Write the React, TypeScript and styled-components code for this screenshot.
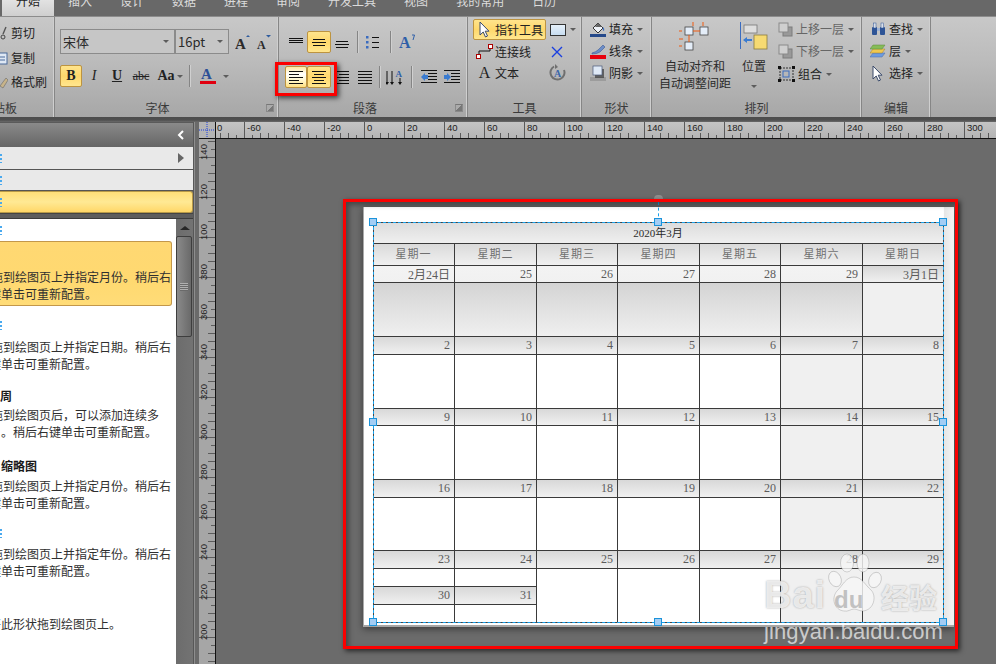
import React from 'react';
import styled, { createGlobalStyle } from 'styled-components';

const Global = createGlobalStyle`
  html, body { margin: 0; padding: 0; background: #6b6b6b; }
  * { box-sizing: border-box; }
`;

const CJK = `"Noto Sans CJK SC", "Liberation Sans", sans-serif`;
const SERIF = `"Liberation Serif", "Noto Sans CJK SC", serif`;

const Root = styled.div`
  position: relative; width: 996px; height: 664px; overflow: hidden;
  display: flex; flex-direction: column; background: #6b6b6b;
  font-family: ${CJK}; font-size: 12px; color: #222;
`;

/* ---------- tabs ---------- */
const TabBar = styled.div`
  height: 16px; flex: none; background: #686868; overflow: hidden;
  display: flex; align-items: flex-end; padding-left: 2px;
`;
const Tab = styled.div<{ $active?: boolean }>`
  padding: 0 14px 8px; line-height: 14px; height: 16px; white-space: nowrap;
  display: flex; align-items: flex-end;
  color: ${p => (p.$active ? '#222' : '#dcdcdc')};
  background: ${p => (p.$active ? 'linear-gradient(#e2e2e2,#cfcfcf)' : 'transparent')};
`;

/* ---------- ribbon ---------- */
const RibbonBar = styled.div`
  height: 101px; flex: none; display: flex;
  border-top: 1px solid #8c8c8c;
  background: linear-gradient(#c8c8c8 0%, #bbb 45%, #a7a7a7 100%);
`;
const Group = styled.div<{ $w: number; $clip?: boolean }>`
  position: relative; width: ${p => p.$w}px; flex: none;
  display: flex; flex-direction: column; overflow: hidden;
  border-right: 1px solid #868686;
  box-shadow: inset -1px 0 0 #cfcfcf;
`;
const Body = styled.div<{ $pt?: number; $pl?: number; $row?: boolean }>`
  flex: 1; min-height: 0; display: flex;
  flex-direction: ${p => (p.$row ? 'row' : 'column')};
  padding-top: ${p => p.$pt ?? 0}px; padding-left: ${p => p.$pl ?? 0}px;
`;
const GroupLabel = styled.div<{ $pr?: number; $ml?: number }>`
  height: 18px; flex: none; line-height: 18px; color: #3a3a3a; white-space: nowrap;
  text-align: ${p => (p.$ml !== undefined ? 'left' : 'center')};
  padding-right: ${p => p.$pr ?? 0}px; margin-left: ${p => p.$ml ?? 0}px;
`;
const Launcher = styled.div`
  position: absolute; right: 4px; bottom: 5px; width: 8px; height: 8px;
  border: 1px solid #8a8a8a; border-top-color: #777; background: linear-gradient(135deg, transparent 50%, #777 50%);
`;
const Row = styled.div<{ $h?: number; $mt?: number }>`
  display: flex; align-items: center; white-space: nowrap;
  height: ${p => p.$h ?? 22}px; margin-top: ${p => p.$mt ?? 0}px;
`;
const Col = styled.div<{ $w?: number; $ml?: number; $pt?: number }>`
  display: flex; flex-direction: column;
  ${p => (p.$w ? `width:${p.$w}px;` : '')}
  margin-left: ${p => p.$ml ?? 0}px; padding-top: ${p => p.$pt ?? 0}px;
`;
const Combo = styled.div<{ $w: number }>`
  width: ${p => p.$w}px; height: 25px; display: flex; align-items: center;
  justify-content: space-between; padding: 0 5px 0 2px; font-size: 13px;
  border: 1px solid #8b8b8b; background: #c6c6c6; color: #2a2a2a;
`;
const Caret = styled.span<{ $ml?: number }>`
  display: inline-block; width: 0; height: 0; flex: none; margin-left: ${p => p.$ml ?? 0}px;
  border-left: 3px solid transparent; border-right: 3px solid transparent; border-top: 3px solid #5c5c5c;
`;
const Btn = styled.div<{ $w: number; $on?: boolean; $light?: boolean }>`
  width: ${p => p.$w}px; height: 22px; flex: none; display: flex; align-items: center; justify-content: center;
  border-radius: 2px; border: 1px solid ${p => (p.$on || p.$light ? '#bd9440' : 'transparent')};
  background: ${p =>
    p.$light ? 'linear-gradient(#ffe9a0,#fff 35%,#fff5c6 70%,#ffdf80)'
      : p.$on ? 'linear-gradient(#ffe48c,#ffd86c 50%,#ffe68e)' : 'transparent'};
`;
const Vr = styled.div<{ $ml?: number; $mr?: number }>`
  width: 1px; height: 22px; flex: none; background: #858585; box-shadow: 1px 0 0 #d0d0d0;
  margin-left: ${p => p.$ml ?? 0}px; margin-right: ${p => p.$mr ?? 0}px;
`;
const ToolBtn = styled.div<{ $on?: boolean; $w?: number }>`
  width: ${p => p.$w ?? 73}px; height: 21px; display: flex; align-items: center; flex: none;
  border-radius: 2px; border: 1px solid ${p => (p.$on ? '#bd9440' : 'transparent')};
  background: ${p => (p.$on ? 'linear-gradient(#ffe48c,#ffd86c 50%,#ffe68e)' : 'transparent')};
`;
const Slot = styled.span<{ $w: number }>`
  width: ${p => p.$w}px; flex: none; display: flex; align-items: center; justify-content: center;
`;
const MenuText = styled.span<{ $ml?: number; $dim?: boolean }>`
  margin-left: ${p => p.$ml ?? 3}px; line-height: 16px;
  color: ${p => (p.$dim ? '#666' : '#222')};
`;
const BigCaption = styled.div`
  line-height: 17px; text-align: center; white-space: nowrap; color: #2a2a2a;
`;
const BigIcon = styled.div`
  height: 31px; margin-top: 5px; margin-bottom: 4px; display: flex; justify-content: center;
`;
const RibbonFoot = styled.div`
  height: 5px; flex: none; background: linear-gradient(#4c4c4c,#4f4f4f 60%,#6a6a6a);
`;

/* ---------- workspace ---------- */
const Workspace = styled.div` flex: 1; min-height: 0; display: flex; `;
const Side = styled.div`
  width: 193px; flex: none; display: flex; flex-direction: column; background: #666;
  overflow: hidden;
`;
const SideHead = styled.div`
  height: 25px; flex: none; display: flex; align-items: center; justify-content: flex-end; padding-right: 8px;
  background: linear-gradient(#8a8a8a,#666);
  border-top: 1px solid #5a5a5a;
`;
const Stencil = styled.div<{ $sel?: boolean; $h: number }>`
  height: ${p => p.$h}px; flex: none; display: flex; align-items: center; justify-content: space-between;
  padding-right: 9px;
  background: ${p => (p.$sel ? 'linear-gradient(#ffdf78,#ffe994 50%,#ffd768)' : '#e9e9e9')};
  ${p => (p.$sel ? 'border:1px solid #b89a48; border-left:none; border-radius:0 3px 3px 0;' : 'border-bottom:1px solid #555;')}
`;
const Sliver = styled.span<{ $c?: string }>`
  width: 1.5px; height: 9px; flex: none; display: block;
  background: repeating-linear-gradient(${p => p.$c ?? '#49a9ee'} 0 2px, transparent 2px 4px);
`;
const StencilFoot = styled.div`
  height: 6px; flex: none; background: #5d5d5d; border-top: 1px solid #444; border-bottom: 1px solid #3c3c3c;
`;
const ListArea = styled.div` flex: 1; min-height: 0; display: flex; `;
const ListBody = styled.div`
  width: 176px; flex: none; background: #fff; display: flex; flex-direction: column; overflow: hidden;
`;
const SliverRow = styled.div<{ $h: number; $mt?: number }>`
  height: ${p => p.$h}px; margin-top: ${p => p.$mt ?? 0}px; flex: none; display: flex; align-items: center;
`;
const HiCard = styled.div`
  width: 172px; height: 65px; flex: none; padding-top: 26px;
  background: linear-gradient(#ffd873,#ffd970 60%,#ffdc78);
  border: 1px solid #c3974a; border-left: none; border-radius: 0 3px 3px 0;
`;
const ItemHead = styled.div<{ $mt: number; $mb: number; $ml?: number }>`
  height: 17px; line-height: 17px; flex: none; font-weight: 700; color: #1a1a1a; white-space: nowrap;
  margin-top: ${p => p.$mt}px; margin-bottom: ${p => p.$mb}px; margin-left: ${p => p.$ml ?? 0}px;
`;
const Line = styled.div<{ $ml: number; $mt?: number }>`
  height: 17px; line-height: 17px; flex: none; white-space: nowrap; color: #2f2f2f;
  margin-left: ${p => p.$ml}px; margin-top: ${p => p.$mt ?? 0}px;
`;
const Scroll = styled.div`
  width: 17px; flex: none; background: linear-gradient(90deg,#6c6c6c,#737373); position: relative;
  display: flex; flex-direction: column; align-items: center; padding-top: 7px;
`;
const ScrollUp = styled.div`
  width: 0; height: 0; flex: none; border-left: 5px solid transparent; border-right: 5px solid transparent;
  border-bottom: 4px solid #262626;
`;
const Thumb = styled.div`
  width: 16px; height: 101px; flex: none; margin-top: 6px; margin-right: 1px; border-radius: 2px;
  border: 1px solid #3e3e3e; background: linear-gradient(90deg,#8a8a8a,#6a6a6a);
  display: flex; align-items: center; justify-content: center;
`;
const Grip = styled.div`
  width: 8px; height: 8px; background: repeating-linear-gradient(#b0b0b0 0 1px, #6a6a6a 1px 2px);
`;
const Splitter = styled.div`
  width: 6px; flex: none; background: #6a6a6a; border-left: 1px solid #575757;
  box-shadow: inset 1px 0 0 #8e8e8e;
`;
const Editor = styled.div`
  flex: 1; min-width: 0; display: grid; grid-template-columns: 17px 1fr; grid-template-rows: 17px 1fr;
`;
const Corner = styled.div`
  background: #b4b4b4; border-right: 1px solid #111; border-bottom: 1px solid #111;
  display: flex; align-items: center; justify-content: center;
`;
const HRuler = styled.div`
  background: linear-gradient(#c4c4c4,#b4b4b4); border-bottom: 1px solid #111; overflow: hidden;
`;
const VRuler = styled.div`
  background: #a6a6a6; border-right: 1px solid #111; overflow: hidden;
`;
const Canvas = styled.div`
  background: #6b6b6b; padding: 68px 0 0 147px; overflow: hidden;
`;
const Page = styled.div`
  width: 591px; height: 420px; padding: 15px 0 0 9px;
  background: linear-gradient(90deg,#fff 98.2%,#e6e6e6 98.4%,#f5f5f5);
  border-left: 1px solid #aaa; border-bottom: 2px solid #a6a6a6;
  box-shadow: 0 2px 7px rgba(0,0,0,.45);
`;
const CalWrap = styled.div` position: relative; width: 570px; height: 400px; `;
const Cal = styled.div`
  display: grid; width: 571px; height: 401px;
  grid-template-columns: 82px 82px 81px 82px 81px 82px 81px;
  grid-template-rows: 22px 22px 17px 54px 18px 54px 17px 54px 18px 53px 18px 18px 18px 18px;
  font-family: ${SERIF}; font-size: 12px; color: #5c5c5c;
`;
const Cell = styled.div`
  border-right: 1px solid #3a3a3a; border-bottom: 1px solid #3a3a3a;
`;
const Title = styled(Cell)`
  grid-column: span 7; display: flex; align-items: center; justify-content: center; color: #2c2c2c;
  font-size: 11px; padding-bottom: 2px; background: linear-gradient(#dcdcdc,#efefef);
`;
const Weekday = styled(Cell)`
  display: flex; align-items: center; justify-content: center; letter-spacing: 1px; font-size: 11px; color: #707070;
  padding-bottom: 3px; background: linear-gradient(#dadada,#f0f0f0);
`;
const DayHead = styled(Cell)<{ $light?: boolean }>`
  display: flex; align-items: center; justify-content: flex-end; padding-right: 4px;
  background: ${p => (p.$light ? 'linear-gradient(#f3f3f3,#f1f1f1)' : 'linear-gradient(#d8d8d8,#f0f0f0)')};
`;
const DayBody = styled(Cell)<{ $tone?: 'grad' | 'soft' | 'white'; $span?: number }>`
  ${p => (p.$span ? `grid-row: span ${p.$span};` : '')}
  background: ${p =>
    p.$tone === 'grad' ? 'linear-gradient(#d4d4d4,#efefef)'
      : p.$tone === 'soft' ? '#f0f0f0' : '#fff'};
`;
const Selection = styled.div`
  position: absolute; inset: 0 -1px -1px 0; border: 1px solid #454545; pointer-events: none;
  &::before {
    content: ''; position: absolute; inset: -1px; border: 1px dashed #17a1ec;
  }
`;
const Handle = styled.div<{ $x: number; $y: number }>`
  position: absolute; width: 8px; height: 8px; margin: -4px 0 0 -4px;
  left: ${p => p.$x}%; top: ${p => p.$y}%;
  background: #a3cdf4; border: 1px solid #1b93da;
`;
const RotLine = styled.div`
  position: absolute; left: 50%; top: -20px; height: 20px; border-left: 1px dashed #17a1ec;
`;
const RotKnob = styled.div`
  position: absolute; left: calc(50% - 4px); top: -27px; width: 9px; height: 6px; border-radius: 4px 4px 1px 1px;
  background: #8f8f8f;
`;
const RedBox = styled.div<{ $l: number; $t: number; $w: number; $h: number; $inset?: boolean }>`
  position: absolute; left: ${p => p.$l}px; top: ${p => p.$t}px; width: ${p => p.$w}px; height: ${p => p.$h}px;
  border: 3px solid #fb0000; pointer-events: none;
  box-shadow: 2px 2px 5px rgba(0,0,0,.65)${p => (p.$inset ? ', inset 3px 3px 5px rgba(0,0,0,.35)' : '')};
`;
const Mark = styled.div`
  position: absolute; left: 764px; top: 553px; width: 190px; color: rgba(255,255,255,.68);
  display: flex; flex-direction: column; pointer-events: none;
`;
const MarkTop = styled.div` display: flex; align-items: flex-end; height: 62px; `;
const MarkBai = styled.span`
  font: 700 38px/40px "Liberation Sans", sans-serif; width: 60px; letter-spacing: 1px; color: rgba(245,245,245,.85);
  text-shadow: 0 0 2px rgba(110,110,110,.6);
`;
const Paw = styled.div` position: relative; width: 56px; height: 62px; flex: none; margin-left: 2px; `;
const MarkDu = styled.span`
  position: absolute; left: 8px; bottom: 2px; font: 700 24px/26px "Liberation Sans", sans-serif; color: rgba(170,170,170,.7);
`;
const MarkCn = styled.span`
  font: 700 28px/36px ${CJK}; margin-left: -1px; color: rgba(245,245,245,.85);
  text-shadow: 0 0 2px rgba(110,110,110,.6);
`;
const MarkUrl = styled.div`
  font: 400 22px/28px "Liberation Sans", sans-serif; margin-top: 3px; white-space: nowrap; letter-spacing: .1px;
`;

/* ---------- icons ---------- */
type L = [number, number, number];
const Bars = ({ lines, w = 16, h = 14 }: { lines: L[]; w?: number; h?: number }) => (
  <svg width={w} height={h} viewBox={`0 0 ${w} ${h}`}>
    {lines.map(([y, a, b], i) => <line key={i} x1={a} x2={b} y1={y + .5} y2={y + .5} stroke="#111" strokeWidth="1" />)}
  </svg>
);
const Letter = styled.span<{ $c?: string; $s?: number; $w?: number; $i?: boolean; $u?: boolean; $st?: boolean }>`
  font-family: "Liberation Serif", serif; font-size: ${p => p.$s ?? 14}px; font-weight: ${p => p.$w ?? 700};
  color: ${p => p.$c ?? '#222'}; line-height: 14px;
  ${p => (p.$i ? 'font-style:italic;' : '')} ${p => (p.$u ? 'text-decoration:underline;' : '')}
  ${p => (p.$st ? 'text-decoration:line-through;' : '')}
`;
const GrowA = ({ up }: { up: boolean }) => (
  <svg width="16" height="16" viewBox="0 0 16 16">
    <path d={up ? 'M11 3l2-2 2 2z' : 'M10 1h5l-2.5 2.5z'} fill="#2f5c9e" />
    <text x={up ? 0 : 1} y="14.5" fontFamily="Liberation Serif" fontWeight="700" fontSize={up ? 15 : 12} fill="#2b2b2b">A</text>
  </svg>
);
const FontColor = () => (
  <svg width="18" height="18" viewBox="0 0 18 18">
    <text x="2" y="12" fontFamily="Liberation Serif" fontWeight="700" fontSize="15" fill="#2b4f96">A</text>
    <rect x="1" y="14" width="16" height="3" fill="#e00010" />
  </svg>
);
const Bullets = () => (
  <svg width="14" height="14" viewBox="0 0 14 14">
    {[1, 6, 11].map(y => <g key={y}><rect x="0" y={y} width="2.500" height="2.500" fill="#3a6cc0" /><line x1="6" x2="13" y1={y + 1.5} y2={y + 1.5} stroke="#111" /></g>)}
  </svg>
);
const StyleA = () => (
  <svg width="16" height="16" viewBox="0 0 16 16">
    <text x="0" y="14" fontFamily="Liberation Serif" fontWeight="700" fontSize="16" fill="#2e5fa8">A</text>
    <path d="M13 1h2.5l-1.5 5" fill="none" stroke="#2e5fa8" />
  </svg>
);
const LineHeight = () => (
  <svg width="17" height="17" viewBox="0 0 17 17">
    {[1, 6].map(x => <g key={x}><line x1={x} x2={x} y1="2" y2="14" stroke="#111" /><path d={`M${x - 2} 13h4l-2 3z`} fill="#111" /></g>)}
    <line x1="14" x2="14" y1="9" y2="14" stroke="#111" /><path d="M12 13h4l-2 3z" fill="#111" />
    <text x="9.5" y="8" fontFamily="Liberation Serif" fontWeight="700" fontSize="9" fill="#2e5fa8">A</text>
  </svg>
);
const Indent = ({ flip }: { flip?: boolean }) => (
  <svg width="16" height="14" viewBox="0 0 16 14">
    {[1, 4, 7, 10, 13].map(y => <line key={y} x1={y === 1 || y === 13 ? 0 : 7} x2="16" y1={y - .5} y2={y - .5} stroke="#111" />)}
    <path d={flip ? 'M0 5h3V3l4 4-4 4V9H0z' : 'M7 5H4V3L0 7l4 4V9h3z'} fill="#3a7bd0" />
  </svg>
);
const Arrow = () => (
  <svg width="14" height="17" viewBox="0 0 14 17">
    <path d="M2 1v13l3.2-3 2.3 5 2-1-2.300-4.800H11z" fill="#fff" stroke="#3a4a6a" strokeWidth="1" />
  </svg>
);
const RectIcon = () => <svg width="16" height="12" viewBox="0 0 16 12"><defs><linearGradient id="ri" x1="0" y1="0" x2="0" y2="1"><stop offset="0" stopColor="#e8f2fb" /><stop offset="1" stopColor="#c6dcf0" /></linearGradient></defs><rect x=".5" y=".5" width="15" height="11" fill="url(#ri)" stroke="#333" /></svg>;
const Connector = () => (
  <svg width="17" height="15" viewBox="0 0 17 15">
    <path d="M3 11V7h11V3" fill="none" stroke="#111" />
    <rect x=".5" y="10.500" width="4" height="4" fill="#fff" stroke="#a00" /><rect x="12.500" y=".5" width="4" height="4" fill="#fff" stroke="#a00" />
  </svg>
);
const BlueX = () => <svg width="12" height="12" viewBox="0 0 12 12"><path d="M1 1l10 10M11 1L1 11" stroke="#1a3fe0" strokeWidth="1.400" /></svg>;
const RotA = () => (
  <svg width="17" height="17" viewBox="0 0 17 17">
    <path d="M5 2.500A7 7 0 1 0 15 6" fill="none" stroke="#6f6f6f" strokeWidth="2" />
    <path d="M6 0v5l3-2z" fill="#6f6f6f" />
    <text x="5" y="13" fontFamily="Liberation Serif" fontWeight="700" fontSize="10" fill="#3b66aa">A</text>
  </svg>
);
const Fill = () => (
  <svg width="16" height="15" viewBox="0 0 16 15">
    <path d="M3 6l5-5 5 5-5 5z" fill="#eef2f8" stroke="#333" />
    <path d="M8 1l-3 4h7z" fill="#666" />
    <path d="M13 5q2 2 1 4-2-1-1-4z" fill="#3a6cc0" />
    <rect x="0" y="12" width="16" height="3" fill="#25498a" />
  </svg>
);
const Pen = () => (
  <svg width="16" height="15" viewBox="0 0 16 15">
    <path d="M2 9q4-1 6-3l5-5 2 2-5 5q-3 2-8 2z" fill="#6c8dc8" stroke="#3c5b96" strokeWidth=".6" />
    <rect x="0" y="11" width="16" height="4" fill="#e8000c" />
  </svg>
);
const Shadow = () => (
  <svg width="16" height="16" viewBox="0 0 16 16">
    <rect x="0" y="12" width="16" height="4" fill="#9c9c9c" />
    <rect x="5" y="4" width="9" height="9" fill="#3c3c3c" opacity=".7" />
    <rect x="3" y="1" width="9" height="9" fill="#dfe9f6" stroke="#4a5a7a" strokeWidth=".7" />
  </svg>
);
const Snap = () => (
  <svg width="32" height="31" viewBox="0 0 32 31">
    {[[10, 9], [25, 9], [10, 24]].map(([x, y], i) => (
      <rect key={i} x={x - 4} y={y - 4} width="8" height="8" fill="#e4edf8" stroke="#444" strokeWidth=".8" />
    ))}
    <path d="M14 9h7M10 13v7" stroke="#f05a10" strokeWidth="1" />
    <path d="M14 0v4M24 0v4M0 17h4M0 9h3M0 24h3" stroke="#f05a10" strokeWidth="1" />
  </svg>
);
const Position = () => (
  <svg width="28" height="31" viewBox="0 0 28 31">
    <line x1=".5" x2=".5" y1="0" y2="27" stroke="#3a6cc0" />
    <rect x="4" y="3" width="13" height="8" fill="#dedede" stroke="#777" strokeWidth=".8" />
    <rect x="14" y="13" width="13" height="14" fill="#f6da72" stroke="#8b7b3e" strokeWidth=".8" />
    <path d="M3 18l4-3v2h5v2H7v2z" fill="#3a7bd0" />
  </svg>
);
const Layers = () => (
  <svg width="15" height="15" viewBox="0 0 15 15">
    <rect x="5" y="5" width="9" height="9" fill="#999" stroke="#7c7c7c" />
    <rect x="1" y="1" width="9" height="9" fill="#cfcfcf" stroke="#8a8a8a" />
  </svg>
);
const GroupIcon = () => (
  <svg width="17" height="16" viewBox="0 0 17 16">
    <rect x="2" y="2" width="13" height="12" fill="none" stroke="#333" strokeDasharray="2 1" />
    <rect x="5" y="5" width="6" height="6" fill="none" stroke="#3a6cc0" />
    {[[0, 0], [14, 0], [0, 13], [14, 13]].map(([x, y], i) => <rect key={i} x={x} y={y} width="3" height="3" fill="#111" />)}
  </svg>
);
const Binoc = () => (
  <svg width="15" height="14" viewBox="0 0 15 14">
    <rect x="1" y="5" width="5" height="8" rx="1" fill="#2e5496" />
    <rect x="9" y="5" width="5" height="8" rx="1" fill="#2e5496" />
    <rect x="2.500" y="1" width="2.500" height="5" fill="#d9dfe9" stroke="#2e5496" strokeWidth=".5" />
    <rect x="10" y="1" width="2.500" height="5" fill="#d9dfe9" stroke="#2e5496" strokeWidth=".5" />
    <rect x="6" y="6" width="3" height="3" fill="#9fb4d6" />
  </svg>
);
const Stack = () => (
  <svg width="16" height="14" viewBox="0 0 16 14">
    <path d="M3 9h12l-3 4H0z" fill="#6d9be0" stroke="#4b6ca8" strokeWidth=".5" />
    <path d="M3 5h12l-3 4H0z" fill="#f0c850" stroke="#a08030" strokeWidth=".5" />
    <path d="M3 1h12l-3 4H0z" fill="#86bc58" stroke="#5a8a3a" strokeWidth=".5" />
  </svg>
);
const Chevron = () => <svg width="8" height="10" viewBox="0 0 8 10"><path d="M6 1L2 5l4 4" fill="none" stroke="#fff" strokeWidth="2" /></svg>;
const RightTri = () => <svg width="6" height="10" viewBox="0 0 6 10"><path d="M0 0l6 5-6 5z" fill="#666" /></svg>;
const Cross = () => (
  <svg width="16" height="16" viewBox="0 0 16 16"><path d="M8 0v16M0 8h16" stroke="#1a3fe0" strokeDasharray="1 1" /></svg>
);
const Scissor = () => <svg width="8" height="14" viewBox="0 0 8 14"><circle cx="3" cy="11" r="2" fill="none" stroke="#444" /><path d="M3 8L6 1" stroke="#555" strokeWidth="1.400" /></svg>;
const CopyI = () => <svg width="8" height="14" viewBox="0 0 8 14"><rect x="-4" y="2" width="11" height="11" fill="#dfe8f4" stroke="#4a6a9a" /><path d="M0 6h5M0 9h5" stroke="#4a6a9a" /></svg>;
const Brush = () => <svg width="8" height="14" viewBox="0 0 8 14"><path d="M0 11L6 3l2 2-5 8z" fill="#c8b48a" stroke="#6a6a6a" strokeWidth=".6" /></svg>;

const HTicks = () => {
  const W = 781;
  const items: React.ReactNode[] = [];
  for (let x = 363 - 160; x < 215 + W; x += 8) {
    const px = x - 215;
    if (px < 0) continue;
    const k = ((x - 363) % 40 + 40) % 40;
    const h = k === 0 ? 16 : k === 16 || k === 24 ? 5 : 3;
    items.push(<line key={x} x1={px + .5} x2={px + .5} y1={16 - h} y2={16} stroke="#5a5a5a" />);
  }
  for (let v = -80; v <= 300; v += 20) {
    const x = 363 + v * 2 - 215;
    const label = v === -80 ? '0' : String(v);
    const tx = v === -80 ? 1 : x + 3;
    items.push(<text key={`t${v}`} x={tx} y="9" fontFamily="Liberation Sans" fontSize="9.500" fill="#222">{label}</text>);
  }
  return <svg width={W} height="16" viewBox={`0 0 ${W} 16`}>{items}</svg>;
};
const VTicks = () => {
  const labels = [140, 120, 100, 380, 360, 340, 320, 300, 280, 260, 240, 220, 200];
  const items: React.ReactNode[] = [];
  for (let y = 157 - 40; y < 664; y += 8) {
    const py = y - 139;
    if (py < 0) continue;
    const k = ((y - 157) % 40 + 40) % 40;
    const w = k === 0 ? 16 : k === 16 || k === 24 ? 7 : 4;
    items.push(<line key={y} x1={16 - w} x2="16" y1={py + .5} y2={py + .5} stroke="#5c5c5c" />);
  }
  labels.forEach((l, i) => {
    const cy = 152 + i * 40 - 139;
    items.push(<text key={l} transform={`translate(7.500 ${cy}) rotate(-90)`} textAnchor="middle" fontFamily="Liberation Sans" fontSize="9.500" fill="#222">{l}</text>);
  });
  return <svg width="16" height="525" viewBox="0 0 16 525">{items}</svg>;
};

const TABS = ['开始', '插入', '设计', '数据', '进程', '审阅', '开发工具', '视图', '我的常用', '日历'];
const WEEK = ['星期一', '星期二', '星期三', '星期四', '星期五', '星期六', '星期日'];

const bodyTone = (col: number): 'soft' | 'white' => (col >= 5 ? 'soft' : 'white');

const Calendar = () => {
  const heads = [
    ['2月24日', '25', '26', '27', '28', '29', '3月1日'],
    ['2', '3', '4', '5', '6', '7', '8'],
    ['9', '10', '11', '12', '13', '14', '15'],
    ['16', '17', '18', '19', '20', '21', '22'],
  ];
  return (
    <Cal>
      <Title>2020年3月</Title>
      {WEEK.map(w => <Weekday key={w}>{w}</Weekday>)}
      {heads.map((row, r) => (
        <React.Fragment key={r}>
          {row.map((d, c) => <DayHead key={d + c} $light={r === 0 && c < 6}>{d}</DayHead>)}
          {row.map((d, c) => (
            <DayBody key={`b${d}${c}`} $tone={r === 0 ? (c < 6 ? 'grad' : 'soft') : bodyTone(c)} />
          ))}
        </React.Fragment>
      ))}
      {['23', '24', '25', '26', '27', '28', '29'].map(d => <DayHead key={`h${d}`}>{d}</DayHead>)}
      <DayBody $tone="white" /><DayBody $tone="white" />
      {[2, 3, 4, 5, 6].map(c => <DayBody key={`s${c}`} $span={3} $tone={bodyTone(c)} />)}
      <DayHead>30</DayHead><DayHead>31</DayHead>
      <DayBody $tone="white" /><DayBody $tone="white" />
    </Cal>
  );
};

const five = (a: number, b: number, c: number, d: number): L[] => [
  [1, 1, 15], [4, a, b], [7, 1, 15], [10, c, d], [13, 1, 15],
];

export default function App() {
  return (
    <Root>
      <Global />
      <TabBar>
        {TABS.map((t, i) => <Tab key={t} $active={i === 0}>{t}</Tab>)}
      </TabBar>
      <RibbonBar>
        <Group $w={55}>
          <Body $pt={4}>
            <Row $h={24}><Slot $w={8}><Scissor /></Slot><MenuText $ml={3}>剪切</MenuText></Row>
            <Row $h={24} $mt={1}><Slot $w={8}><CopyI /></Slot><MenuText $ml={3}>复制</MenuText></Row>
            <Row $h={24}><Slot $w={8}><Brush /></Slot><MenuText $ml={3}>格式刷</MenuText></Row>
          </Body>
          <GroupLabel $ml={-7}>贴板</GroupLabel>
        </Group>

        <Group $w={224}>
          <Body $pt={12} $pl={5}>
            <Row $h={25}>
              <Combo $w={115}>宋体<Caret /></Combo>
              <Combo $w={54}>16pt<Caret /></Combo>
              <Slot $w={6} />
              <Slot $w={16}><GrowA up /></Slot>
              <Slot $w={5} />
              <Slot $w={16}><GrowA up={false} /></Slot>
            </Row>
            <Row $mt={11}>
              <Btn $w={22} $on><Letter>B</Letter></Btn>
              <Btn $w={24}><Letter $i $w={400}>I</Letter></Btn>
              <Btn $w={22}><Letter $u>U</Letter></Btn>
              <Btn $w={26}><Letter $st $s={12} $w={400}>abc</Letter></Btn>
              <Btn $w={32}><Letter $s={14}>Aa</Letter><Caret $ml={2} /></Btn>
              <Vr $ml={3} $mr={5} />
              <Slot $w={25}><FontColor /></Slot>
              <Caret $ml={3} />
            </Row>
          </Body>
          <GroupLabel $pr={18}>字体</GroupLabel>
          <Launcher />
        </Group>

        <Group $w={189}>
          <Body $pt={14} $pl={6}>
            <Row>
              <Btn $w={22}><Bars lines={[[3, 1, 15], [5, 1, 15], [7, 1, 15]]} /></Btn>
              <Btn $w={24} $on><Bars lines={[[4, 2, 14], [7, 1, 15], [10, 2, 14]]} /></Btn>
              <Btn $w={22}><Bars lines={[[6, 2, 14], [9, 1, 15], [12, 2, 14]]} /></Btn>
              <Vr $ml={4} />
              <Btn $w={30}><Bullets /></Btn>
              <Vr $ml={2} $mr={5} />
              <Btn $w={22}><StyleA /></Btn>
            </Row>
            <Row $mt={13}>
              <Btn $w={22} $light><Bars lines={five(1, 11, 1, 11)} /></Btn>
              <Btn $w={24} $on><Bars lines={five(3, 13, 3, 13)} /></Btn>
              <Btn $w={22}><Bars lines={five(5, 15, 5, 15)} /></Btn>
              <Btn $w={23}><Bars lines={five(1, 15, 1, 15)} /></Btn>
              <Vr $ml={3} $mr={3} />
              <Btn $w={22}><LineHeight /></Btn>
              <Vr $ml={6} $mr={5} />
              <Btn $w={23}><Indent /></Btn>
              <Btn $w={23}><Indent flip /></Btn>
            </Row>
          </Body>
          <GroupLabel $pr={16}>段落</GroupLabel>
          <Launcher />
        </Group>

        <Group $w={114}>
          <Body $pt={2} $pl={5}>
            <Row $h={21}>
              <ToolBtn $on><Slot $w={21}><Arrow /></Slot><MenuText $ml={0}>指针工具</MenuText></ToolBtn>
              <Slot $w={4} /><RectIcon /><Caret $ml={4} />
            </Row>
            <Row $h={21} $mt={1}>
              <ToolBtn><Slot $w={21}><Connector /></Slot><MenuText $ml={0}>连接线</MenuText></ToolBtn>
              <Slot $w={22}><BlueX /></Slot>
            </Row>
            <Row $h={21}>
              <ToolBtn><Slot $w={21}><Letter $s={16} $w={400}>A</Letter></Slot><MenuText $ml={0}>文本</MenuText></ToolBtn>
              <Slot $w={22}><RotA /></Slot>
            </Row>
          </Body>
          <GroupLabel>工具</GroupLabel>
        </Group>

        <Group $w={70}>
          <Body $pl={8} $pt={1}>
            <Row><Fill /><MenuText>填充</MenuText><Caret $ml={4} /></Row>
            <Row><Pen /><MenuText>线条</MenuText><Caret $ml={4} /></Row>
            <Row><Shadow /><MenuText>阴影</MenuText><Caret $ml={4} /></Row>
          </Body>
          <GroupLabel>形状</GroupLabel>
        </Group>

        <Group $w={210}>
          <Body $row>
            <Col $w={86}>
              <BigIcon><Snap /></BigIcon>
              <BigCaption>自动对齐和</BigCaption>
              <BigCaption>自动调整间距</BigCaption>
            </Col>
            <Col $w={32}>
              <BigIcon><Position /></BigIcon>
              <BigCaption>位置</BigCaption>
              <BigCaption><Caret /></BigCaption>
            </Col>
            <Col $ml={8} $pt={1}>
              <Row><Layers /><MenuText $dim>上移一层</MenuText><Caret $ml={4} /></Row>
              <Row><Layers /><MenuText $dim>下移一层</MenuText><Caret $ml={4} /></Row>
              <Row $h={24}><GroupIcon /><MenuText>组合</MenuText><Caret $ml={4} /></Row>
            </Col>
          </Body>
          <GroupLabel>排列</GroupLabel>
        </Group>

        <Group $w={69}>
          <Body $pl={8} $pt={1}>
            <Row><Slot $w={16}><Binoc /></Slot><MenuText>查找</MenuText><Caret $ml={4} /></Row>
            <Row><Slot $w={16}><Stack /></Slot><MenuText>层</MenuText><Caret $ml={4} /></Row>
            <Row><Slot $w={16}><Arrow /></Slot><MenuText>选择</MenuText><Caret $ml={4} /></Row>
          </Body>
          <GroupLabel>编辑</GroupLabel>
        </Group>
      </RibbonBar>
      <RibbonFoot />

      <Workspace>
        <Side>
          <SideHead><Chevron /></SideHead>
          <Stencil $h={23}><Sliver /><RightTri /></Stencil>
          <Stencil $h={21}><Sliver /></Stencil>
          <Stencil $h={22} $sel><Sliver /></Stencil>
          <StencilFoot />
          <ListArea>
            <ListBody>
              <SliverRow $h={22}><Sliver /></SliverRow>
              <HiCard>
                <Line $ml={-9}>拖到绘图页上并指定月份。稍后右</Line>
                <Line $ml={-11}>键单击可重新配置。</Line>
              </HiCard>
              <SliverRow $h={17} $mt={11}><Sliver /></SliverRow>
              <Line $ml={-9} $mt={4}>拖到绘图页上并指定日期。稍后右</Line>
              <Line $ml={-11}>键单击可重新配置。</Line>
              <ItemHead $mt={15} $mb={2}>周</ItemHead>
              <Line $ml={-9}>拖到绘图页后，可以添加连续多</Line>
              <Line $ml={1}>。稍后右键单击可重新配置。</Line>
              <ItemHead $mt={17} $mb={3} $ml={1}>缩略图</ItemHead>
              <Line $ml={-9}>拖到绘图页上并指定月份。稍后右</Line>
              <Line $ml={-11}>键单击可重新配置。</Line>
              <SliverRow $h={17} $mt={14}><Sliver /></SliverRow>
              <Line $ml={-9} $mt={3}>拖到绘图页上并指定年份。稍后右</Line>
              <Line $ml={-11}>键单击可重新配置。</Line>
              <Line $ml={-11} $mt={36}>将此形状拖到绘图页上。</Line>
            </ListBody>
            <Scroll>
              <ScrollUp />
              <Thumb><Grip /></Thumb>
            </Scroll>
          </ListArea>
        </Side>
        <Splitter />
        <Editor>
          <Corner><Cross /></Corner>
          <HRuler><HTicks /></HRuler>
          <VRuler><VTicks /></VRuler>
          <Canvas>
            <Page>
              <CalWrap>
                <Calendar />
                <Selection />
                <RotLine />
                <RotKnob />
                {[[0, 0], [50, 0], [100, 0], [0, 50], [100, 50], [0, 100], [50, 100], [100, 100]].map(([x, y]) => (
                  <Handle key={`${x}-${y}`} $x={x} $y={y} />
                ))}
              </CalWrap>
            </Page>
          </Canvas>
        </Editor>
      </Workspace>

      <RedBox $l={275} $t={62} $w={62} $h={34} />
      <RedBox $l={343} $t={199} $w={615} $h={450} $inset />

      <Mark>
        <MarkTop>
          <MarkBai>Bai</MarkBai>
          <Paw>
            <svg width="56" height="62" viewBox="0 0 56 62">
              <g fill="rgba(245,245,245,.82)" stroke="rgba(130,130,130,.4)" strokeWidth=".8">
                <ellipse cx="9" cy="26" rx="6" ry="8" transform="rotate(-25 9 26)" />
                <ellipse cx="21" cy="10" rx="6.500" ry="9" />
                <ellipse cx="37" cy="10" rx="6" ry="9" />
                <ellipse cx="49" cy="27" rx="6" ry="8" transform="rotate(25 49 27)" />
                <path d="M28 24c8 0 11 8 17 13 6 6 3 20-8 21-4 0-6-2-9-2s-6 3-10 2C8 57 5 45 11 38c6-6 9-14 17-14z" />
              </g>
            </svg>
            <MarkDu>du</MarkDu>
          </Paw>
          <MarkCn>经验</MarkCn>
        </MarkTop>
        <MarkUrl>jingyan.baidu.com</MarkUrl>
      </Mark>
    </Root>
  );
}
